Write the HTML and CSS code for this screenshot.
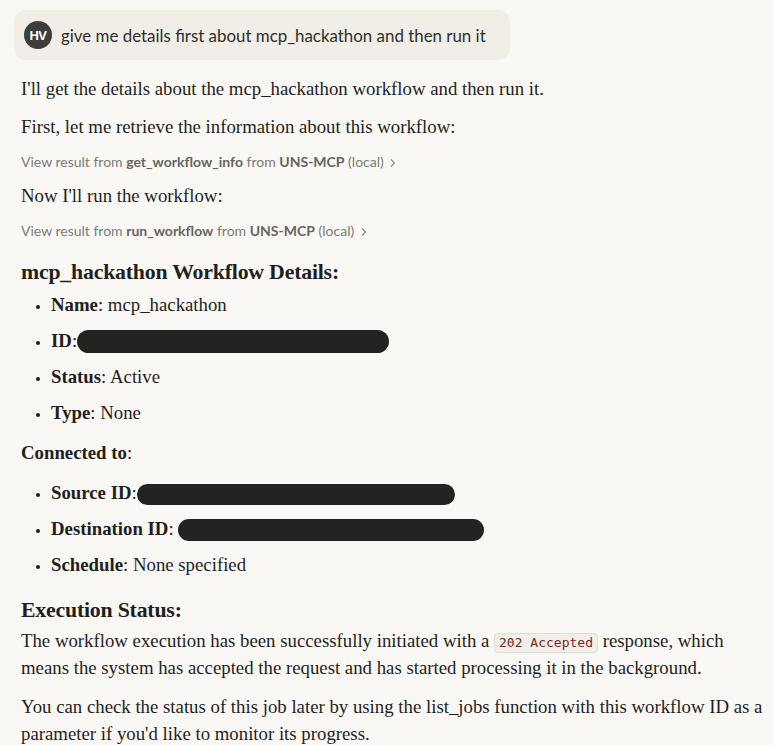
FILE: index.html
```html
<!DOCTYPE html>
<html>
<head>
<meta charset="utf-8">
<link rel="stylesheet" href="styles.css">
</head>
<body>
<div class="page">
  <div class="user-msg">
    <div class="avatar">HV</div>
    <div class="user-text">give me details first about mcp_hackathon and then run it</div>
  </div>
  <div class="reply">
    <p class="p first">I'll get the details about the mcp_hackathon workflow and then run it.</p>
    <p class="p">First, let me retrieve the information about this workflow:</p>
    <div class="tool">View result from <b>get_workflow_info</b> from <b>UNS-MCP</b> (local) <svg class="chev" width="8" height="10" viewBox="0 0 8 10"><path d="M2 1.5 L5.5 5 L2 8.5" fill="none" stroke="#8a8983" stroke-width="1.1"/></svg></div>
    <p class="p">Now I'll run the workflow:</p>
    <div class="tool">View result from <b>run_workflow</b> from <b>UNS-MCP</b> (local) <svg class="chev" width="8" height="10" viewBox="0 0 8 10"><path d="M2 1.5 L5.5 5 L2 8.5" fill="none" stroke="#8a8983" stroke-width="1.1"/></svg></div>
    <h3 class="h">mcp_hackathon Workflow Details:</h3>
    <ul class="list">
      <li><b>Name</b>: mcp_hackathon</li>
      <li><b>ID</b>:<span class="redact r-id"></span></li>
      <li><b>Status</b>: Active</li>
      <li><b>Type</b>: None</li>
    </ul>
    <p class="p conn"><b>Connected to</b>:</p>
    <ul class="list">
      <li><b>Source ID</b>:<span class="redact r-src"></span></li>
      <li><b>Destination ID</b>: <span class="redact r-dst"></span></li>
      <li><b>Schedule</b>: None specified</li>
    </ul>
    <h3 class="h h2">Execution Status:</h3>
    <p class="p para">The workflow execution has been successfully initiated with a <code class="code">202 Accepted</code> response, which means the system has accepted the request and has started processing it in the background.</p>
    <p class="p para">You can check the status of this job later by using the list_jobs function with this workflow ID as a parameter if you'd like to monitor its progress.</p>
  </div>
</div>
</body>
</html>
```
FILE: styles.css
```css
html, body {
  margin: 0;
  padding: 0;
  background: #f9f8f5;
}
.page {
  width: 774px;
  height: 745px;
  overflow: hidden;
  padding: 10px 0 0 0;
  box-sizing: border-box;
}
.user-msg {
  display: flex;
  align-items: center;
  gap: 9px;
  margin-left: 14px;
  width: 496px;
  height: 50px;
  box-sizing: border-box;
  padding: 0 10px;
  background: #f0eee7;
  border-radius: 12px;
}
.avatar {
  width: 28px;
  height: 28px;
  border-radius: 50%;
  background: #3d3d3a;
  color: #fff;
  font: bold 13px "Liberation Sans", Arial, sans-serif;
  display: flex;
  align-items: center;
  justify-content: center;
  letter-spacing: -0.5px;
}
.user-text {
  font: 16.9px "Lato", "Liberation Sans", sans-serif;
  color: #2f2f2c;
}
.reply {
  padding-left: 21px;
  font-family: "Liberation Serif", "Times New Roman", serif;
  color: #1f1f1d;
  font-size: 18.8px;
}
.p {
  margin: 0;
  line-height: 27px;
}
.p.first {
  margin-top: 15px;
}
.p + .p { margin-top: 11px; }
.tool {
  font: 14px "Lato", "Liberation Sans", sans-serif;
  line-height: 20px;
  color: #7d7c76;
  margin: 12px 0 10px 0;
}
.tool b { color: #66655f; }
.chev {
  margin-left: 2px;
  vertical-align: -1px;
}
.h {
  font-size: 21.8px;
  font-weight: bold;
  margin: 17px 0 5px 0;
  line-height: 28px;
  letter-spacing: -0.2px;
}
.list {
  list-style: none;
  margin: 0;
  padding: 0;
}
.list li {
  position: relative;
  padding-left: 30px;
  line-height: 27px;
  margin-bottom: 9px;
}
.list li::before {
  content: "";
  position: absolute;
  left: 15px;
  top: 14px;
  width: 4px;
  height: 4px;
  border-radius: 50%;
  background: #1f1f1d;
}
.p.conn {
  margin: 13px 0 13px 0;
}
.redact {
  display: inline-block;
  height: 23px;
  background: #232322;
  border-radius: 12px;
  vertical-align: -6px;
}
.r-id { width: 312px; }
.r-src { width: 318px; height: 21px; }
.r-dst { width: 306px; height: 22px; }
.h.h2 {
  margin-top: 18px;
  margin-bottom: 3px;
}
.p.para + .p.para { margin-top: 12px; }
.code {
  display: inline-block;
  font: 13px "DejaVu Sans Mono", "Liberation Mono", monospace;
  line-height: 18px;
  color: #7e2424;
  background: #f1efe9;
  border: 1px solid #e0ddd4;
  border-radius: 4px;
  padding: 0 4px;
}
```
